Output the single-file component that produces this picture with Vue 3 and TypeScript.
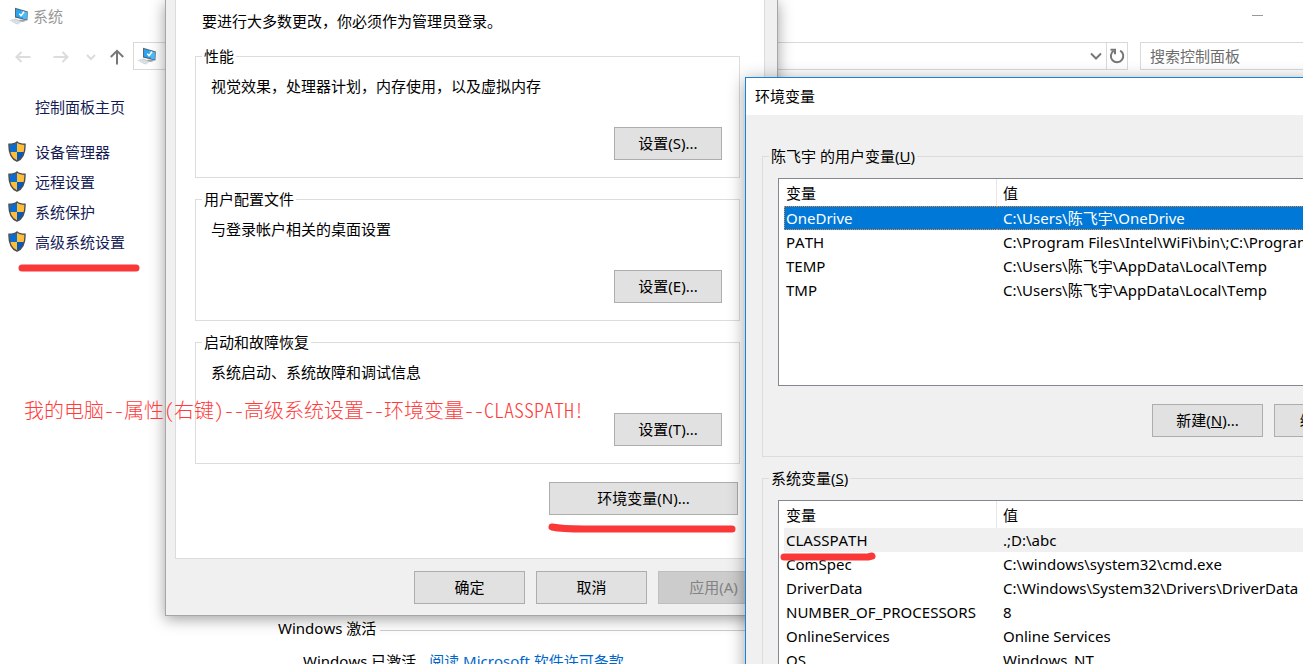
<script setup lang="ts">
interface Variable {
  name: string
  value: string
}

interface VariableGroup {
  id: string
  title: string
  key: string
  active: number
  focused: boolean
  rows: Variable[]
}

interface SettingGroup {
  title: string
  text: string
  button: string
}

const tasks: string[] = ['设备管理器', '远程设置', '系统保护', '高级系统设置']

const settings: SettingGroup[] = [
  { title: '性能', text: '视觉效果，处理器计划，内存使用，以及虚拟内存', button: '设置(S)...' },
  { title: '用户配置文件', text: '与登录帐户相关的桌面设置', button: '设置(E)...' },
  { title: '启动和故障恢复', text: '系统启动、系统故障和调试信息', button: '设置(T)...' },
]

const groups: VariableGroup[] = [
  {
    id: 'user',
    title: '陈飞宇 的用户变量',
    key: 'U',
    active: 0,
    focused: true,
    rows: [
      { name: 'OneDrive', value: 'C:\\Users\\陈飞宇\\OneDrive' },
      { name: 'PATH', value: 'C:\\Program Files\\Intel\\WiFi\\bin\\;C:\\Program Files' },
      { name: 'TEMP', value: 'C:\\Users\\陈飞宇\\AppData\\Local\\Temp' },
      { name: 'TMP', value: 'C:\\Users\\陈飞宇\\AppData\\Local\\Temp' },
    ],
  },
  {
    id: 'system',
    title: '系统变量',
    key: 'S',
    active: 0,
    focused: false,
    rows: [
      { name: 'CLASSPATH', value: '.;D:\\abc' },
      { name: 'ComSpec', value: 'C:\\windows\\system32\\cmd.exe' },
      { name: 'DriverData', value: 'C:\\Windows\\System32\\Drivers\\DriverData' },
      { name: 'NUMBER_OF_PROCESSORS', value: '8' },
      { name: 'OnlineServices', value: 'Online Services' },
      { name: 'OS', value: 'Windows_NT' },
    ],
  },
]
</script>

<template>
  <div class="desktop">
    <svg class="symbols" aria-hidden="true">
      <symbol id="computer" viewBox="0 0 20 18">
        <path d="M0.5 13.2 L6.5 11.6 L13 14.6 L9 17.4 L6.5 16.8 Z" fill="#c9d0d6" />
        <path d="M1.5 13.4 L10 16.6 M4 12.6 L11.5 15.6" stroke="#eef1f3" stroke-width="0.7" />
        <path d="M9 13 L14.5 12.4 L17.5 13.8 L13.5 15 Z" fill="#9aa3ab" />
        <path d="M6 0.8 L18.8 4.6 L18.4 13.6 L6 10.4 Z" fill="#55616b" />
        <path d="M6.9 2 L18 5.3 L17.7 12.4 L6.9 9.6 Z" fill="#27a5f2" />
        <path d="M12 3.5 L18 5.3 L17.7 12.4 L14 11.4 Z" fill="#4ebbfb" />
        <path d="M10.2 6.6 L12 8.8 L15 4.8" fill="none" stroke="#fff" stroke-width="1.5" />
      </symbol>
      <symbol id="shield" viewBox="0 0 18 21">
        <clipPath id="shield-shape">
          <path d="M9 1.2 C7 2.9 4 3.4 1.2 3.4 C0.9 11 2.2 17 9 19.9 C15.800 17 17.100 11 16.800 3.400 C14 3.400 11 2.900 9 1.200 Z" />
        </clipPath>
        <g clip-path="url(#shield-shape)">
          <path d="M0 0 H9 V11 H0 Z" fill="#0a6cce" />
          <path d="M9 0 H18 V11 H9 Z" fill="#ffbd38" />
          <path d="M0 11 H9 V21 H0 Z" fill="#ffbd38" />
          <path d="M9 11 H18 V21 H9 Z" fill="#0558bd" />
        </g>
        <path
          d="M9 1 C7 2.7 4 3.2 1 3.2 C0.7 11 2 17.200 9 20.200 C16 17.200 17.300 11 17 3.200 C14 3.200 11 2.700 9 1 Z"
          fill="none"
          stroke="#4b4d50"
          stroke-width="1.4"
        />
      </symbol>
    </svg>

    <main class="system">
      <header class="titlebar">
        <svg class="computer"><use href="#computer" /></svg>
        <span class="window-name">系统</span>
        <button class="minimize" type="button" aria-label="最小化"></button>
      </header>

      <nav class="toolbar">
        <button class="nav faint" type="button" aria-label="后退">
          <svg width="16" height="14" viewBox="0 0 16 14"><path d="M15.500 7 H1.500 M6.500 2 L1.500 7 L6.500 12" /></svg>
        </button>
        <button class="nav faint" type="button" aria-label="前进">
          <svg width="16" height="14" viewBox="0 0 16 14"><path d="M0.500 7 H14.500 M9.500 2 L14.500 7 L9.500 12" /></svg>
        </button>
        <button class="nav faint narrow" type="button" aria-label="最近的位置">
          <svg width="10" height="8" viewBox="0 0 10 8"><path d="M1 2 L5 6 L9 2" /></svg>
        </button>
        <button class="nav up" type="button" aria-label="向上">
          <svg width="16" height="16" viewBox="0 0 16 16"><path d="M8 15.500 V2 M1.800 8 L8 1.800 L14.200 8" /></svg>
        </button>
        <div class="address">
          <svg class="computer"><use href="#computer" /></svg>
          <button class="expand" type="button" aria-label="展开地址">
            <svg width="12" height="8" viewBox="0 0 12 8"><path d="M1 1.500 L6 6.500 L11 1.500" /></svg>
          </button>
          <button class="refresh" type="button" aria-label="刷新">
            <svg width="16" height="16" viewBox="0 0 16 16">
              <path d="M11.200 2.700 A6.200 6.200 0 1 1 4.600 2.900" />
              <path d="M1.500 1.800 H6 V6.200" />
            </svg>
          </button>
        </div>
        <input class="search" type="search" placeholder="搜索控制面板" aria-label="搜索控制面板" />
      </nav>

      <div class="content">
        <aside class="sidebar">
          <a class="home" href="#">控制面板主页</a>
          <ul class="tasks">
            <li v-for="task in tasks" :key="task">
              <svg class="shield"><use href="#shield" /></svg>
              <a href="#">{{ task }}</a>
            </li>
          </ul>
        </aside>
        <section class="activation">
          <h2>Windows 激活</h2>
          <p>Windows 已激活 <a href="#">阅读 Microsoft 软件许可条款</a></p>
        </section>
      </div>
    </main>

    <section class="window properties" role="dialog" aria-label="系统属性">
      <div class="sheet">
        <p class="notice">要进行大多数更改，你必须作为管理员登录。</p>
        <fieldset v-for="item in settings" :key="item.title" class="group">
          <legend>{{ item.title }}</legend>
          <p>{{ item.text }}</p>
          <button class="push" type="button">{{ item.button }}</button>
        </fieldset>
        <button class="push environment" type="button">环境变量(N)...</button>
      </div>
      <footer class="actions">
        <button class="push wide" type="button">确定</button>
        <button class="push wide" type="button">取消</button>
        <button class="push wide" type="button" disabled>应用(A)</button>
      </footer>
    </section>

    <section class="window variables" role="dialog" aria-labelledby="variables-title">
      <h1 id="variables-title">环境变量</h1>
      <div class="variables-body">
        <fieldset v-for="group in groups" :key="group.id" class="group">
          <legend>{{ group.title }}(<u>{{ group.key }}</u>)</legend>
          <div class="list">
            <table>
              <thead>
                <tr>
                  <th class="name" scope="col">变量</th>
                  <th scope="col">值</th>
                </tr>
              </thead>
              <tbody>
                <tr
                  v-for="(row, index) in group.rows"
                  :key="row.name"
                  :class="{ current: index === group.active, focused: index === group.active && group.focused }"
                >
                  <td>{{ row.name }}</td>
                  <td>{{ row.value }}</td>
                </tr>
              </tbody>
            </table>
          </div>
          <div v-if="group.id === 'user'" class="list-actions">
            <button class="push wide" type="button">新建(<u>N</u>)...</button>
            <button class="push wide" type="button">编辑(<u>E</u>)...</button>
          </div>
        </fieldset>
      </div>
    </section>

    <svg class="marks" aria-hidden="true">
      <path d="M22 268 H136" />
      <path d="M552 527 C562 529 570 529 584 529 H732" />
      <path d="M784 557 H868 L872 556" />
    </svg>
    <p class="note">我的电脑--属性(右键)--高级系统设置--环境变量--CLASSPATH!</p>
  </div>
</template>

<style>
body {
  margin: 0;
}
</style>

<style scoped>
.desktop {
  position: relative;
  height: 100vh;
  overflow: hidden;
  background: #fff;
  color: #000;
  font: 15px/20px "Noto Sans", "Noto Sans CJK SC", sans-serif;
  font-kerning: none;
}

.desktop * {
  box-sizing: border-box;
}

button,
input {
  margin: 0;
  padding: 0;
  border: 0;
  background: none;
  color: inherit;
  font: inherit;
}

p,
h1,
h2,
ul {
  margin: 0;
  padding: 0;
  font-size: 15px;
  font-weight: 400;
  list-style: none;
}

a {
  color: #0066cc;
  text-decoration: none;
}

.symbols {
  position: absolute;
  width: 0;
  height: 0;
}

.computer {
  flex: none;
  width: 20px;
  height: 18px;
}

.titlebar {
  display: flex;
  align-items: center;
  height: 34px;
  padding: 0 40px 2px 9px;
  color: #999;
}

.window-name {
  margin-left: 4px;
}

.minimize {
  width: 11px;
  height: 10px;
  margin: 0 0 10px auto;
  border-bottom: 1px solid #999;
}

.toolbar {
  display: flex;
  height: 44px;
  padding: 8px 0 8px 4px;
}

.nav {
  display: flex;
  flex: none;
  align-items: center;
  justify-content: center;
  width: 38px;
  padding-top: 2px;
}

.nav svg,
.expand svg,
.refresh svg {
  fill: none;
  stroke: #777;
  stroke-width: 2;
}

.nav.faint svg {
  stroke: #dcdcdc;
}

.nav.narrow {
  width: 22px;
}

.nav.up {
  width: 30px;
  margin-right: 1px;
}

.address {
  display: flex;
  flex: 1;
  align-items: center;
  min-width: 0;
  margin-right: 12px;
  padding-left: 3px;
  border: 1px solid #d9d9d9;
}

.expand,
.refresh {
  display: flex;
  align-items: center;
  justify-content: center;
  width: 21px;
  height: 26px;
}

.expand {
  margin-left: auto;
}

.refresh {
  border-left: 1px solid #d9d9d9;
}

.search {
  flex: none;
  width: 163px;
  padding-left: 9px;
  border: 1px solid #d9d9d9;
  border-right: 0;
  border-radius: 0;
  appearance: none;
}

.search::placeholder {
  color: #6d6d6d;
  opacity: 1;
}

.content {
  display: flex;
}

.sidebar {
  flex: none;
  width: 278px;
  padding: 19px 0 0 8px;
}

.sidebar a {
  color: #151c55;
}

.home {
  display: block;
  margin: 0 0 20px 27px;
}

.tasks li {
  display: flex;
  align-items: center;
  gap: 9px;
  height: 30px;
}

.shield {
  width: 18px;
  height: 21px;
  margin-bottom: 2px;
}

.activation {
  flex: 1;
  padding-top: 540px;
}

.activation h2 {
  display: flex;
  align-items: center;
  gap: 4px;
}

.activation h2::after {
  content: "";
  flex: 1;
  height: 1px;
  margin-top: 4px;
  background: #ccc;
}

.activation p {
  margin: 13px 0 0 25px;
}

.activation p a {
  margin-left: 9px;
}

.window {
  position: absolute;
  background: #f0f0f0;
}

.properties {
  top: 0;
  left: 165px;
  width: 613px;
  padding: 0 12px 11px 9px;
  border: 1px solid #a6a6a6;
  border-top: 0;
  box-shadow: 0 3px 14px rgba(0, 0, 0, 0.38);
}

.sheet {
  display: flex;
  flex-direction: column;
  padding: 11px 24px 43px 19px;
  border: 1px solid #dcdcdc;
  border-top: 0;
  background: #fff;
}

.notice {
  margin: 0 0 15px 7px;
}

.group {
  min-width: 0;
  margin: 0 0 11px;
  padding: 0;
  border: 1px solid #dcdcdc;
}

.group legend {
  margin-left: 6px;
  padding: 0 2px;
}

.properties .group {
  display: flow-root;
}

.properties .group p {
  margin: 10px 15px 31px;
}

.push {
  display: block;
  width: 108px;
  height: 33px;
  padding-bottom: 2px;
  border: 1px solid #adadad;
  background: #e1e1e1;
  line-height: 20px;
  text-align: center;
}

.push:disabled {
  border-color: #bfbfbf;
  background: #ccc;
  color: #838383;
}

.properties .group .push {
  margin: 0 17px 17px auto;
}

.environment {
  align-self: flex-end;
  width: 189px;
  margin: 7px 2px 0 0;
}

.push.wide {
  width: 111px;
}

.actions {
  display: flex;
  justify-content: flex-end;
  gap: 11px;
  padding-top: 12px;
}

.actions .push:last-child {
  margin-right: -4px;
}

.variables {
  top: 77px;
  right: -115px;
  left: 745px;
  border: 1px solid #1883d7;
  box-shadow: 0 3px 16px rgba(0, 0, 0, 0.38);
}

.variables h1 {
  padding: 8px 9px 9px;
  background: #fff;
}

.variables-body {
  padding: 31px 16px 16px;
}

.variables .list {
  height: 208px;
  margin: 12px 15px 0;
  padding-left: 5px;
  overflow: hidden;
  border: 1px solid #828790;
  background: #fff;
}

.list-actions {
  display: flex;
  justify-content: flex-end;
  gap: 11px;
  padding: 18px 15px 19px;
}

table {
  width: 100%;
  border-collapse: separate;
  border-spacing: 0;
  table-layout: fixed;
}

th,
td {
  height: 24px;
  padding: 0 0 0 6px;
  font-weight: 400;
  text-align: left;
  white-space: nowrap;
}

th {
  height: 27px;
}

th.name {
  width: 213px;
  border-right: 1px solid #e5e5e5;
}

th:first-child,
td:first-child {
  padding-left: 2px;
}

.current {
  background: #f0f0f0;
}

.focused {
  background: #0078d7;
  color: #fff;
}

.focused td {
  border: 1px dotted #ff8728;
  border-width: 1px 0;
}

.focused td:first-child {
  padding-left: 1px;
  border-left-width: 1px;
}

.marks {
  position: absolute;
  inset: 0;
  width: 100%;
  height: 100%;
  fill: none;
  stroke: #fb3838;
  stroke-width: 7;
  stroke-linecap: round;
  stroke-linejoin: round;
  pointer-events: none;
}

.note {
  position: absolute;
  top: 398px;
  left: 24px;
  color: #ff3b3b;
  font: 300 20px/24px "Noto Sans CJK SC", sans-serif;
  font-feature-settings: "hwid" 1;
  white-space: nowrap;
}
</style>
